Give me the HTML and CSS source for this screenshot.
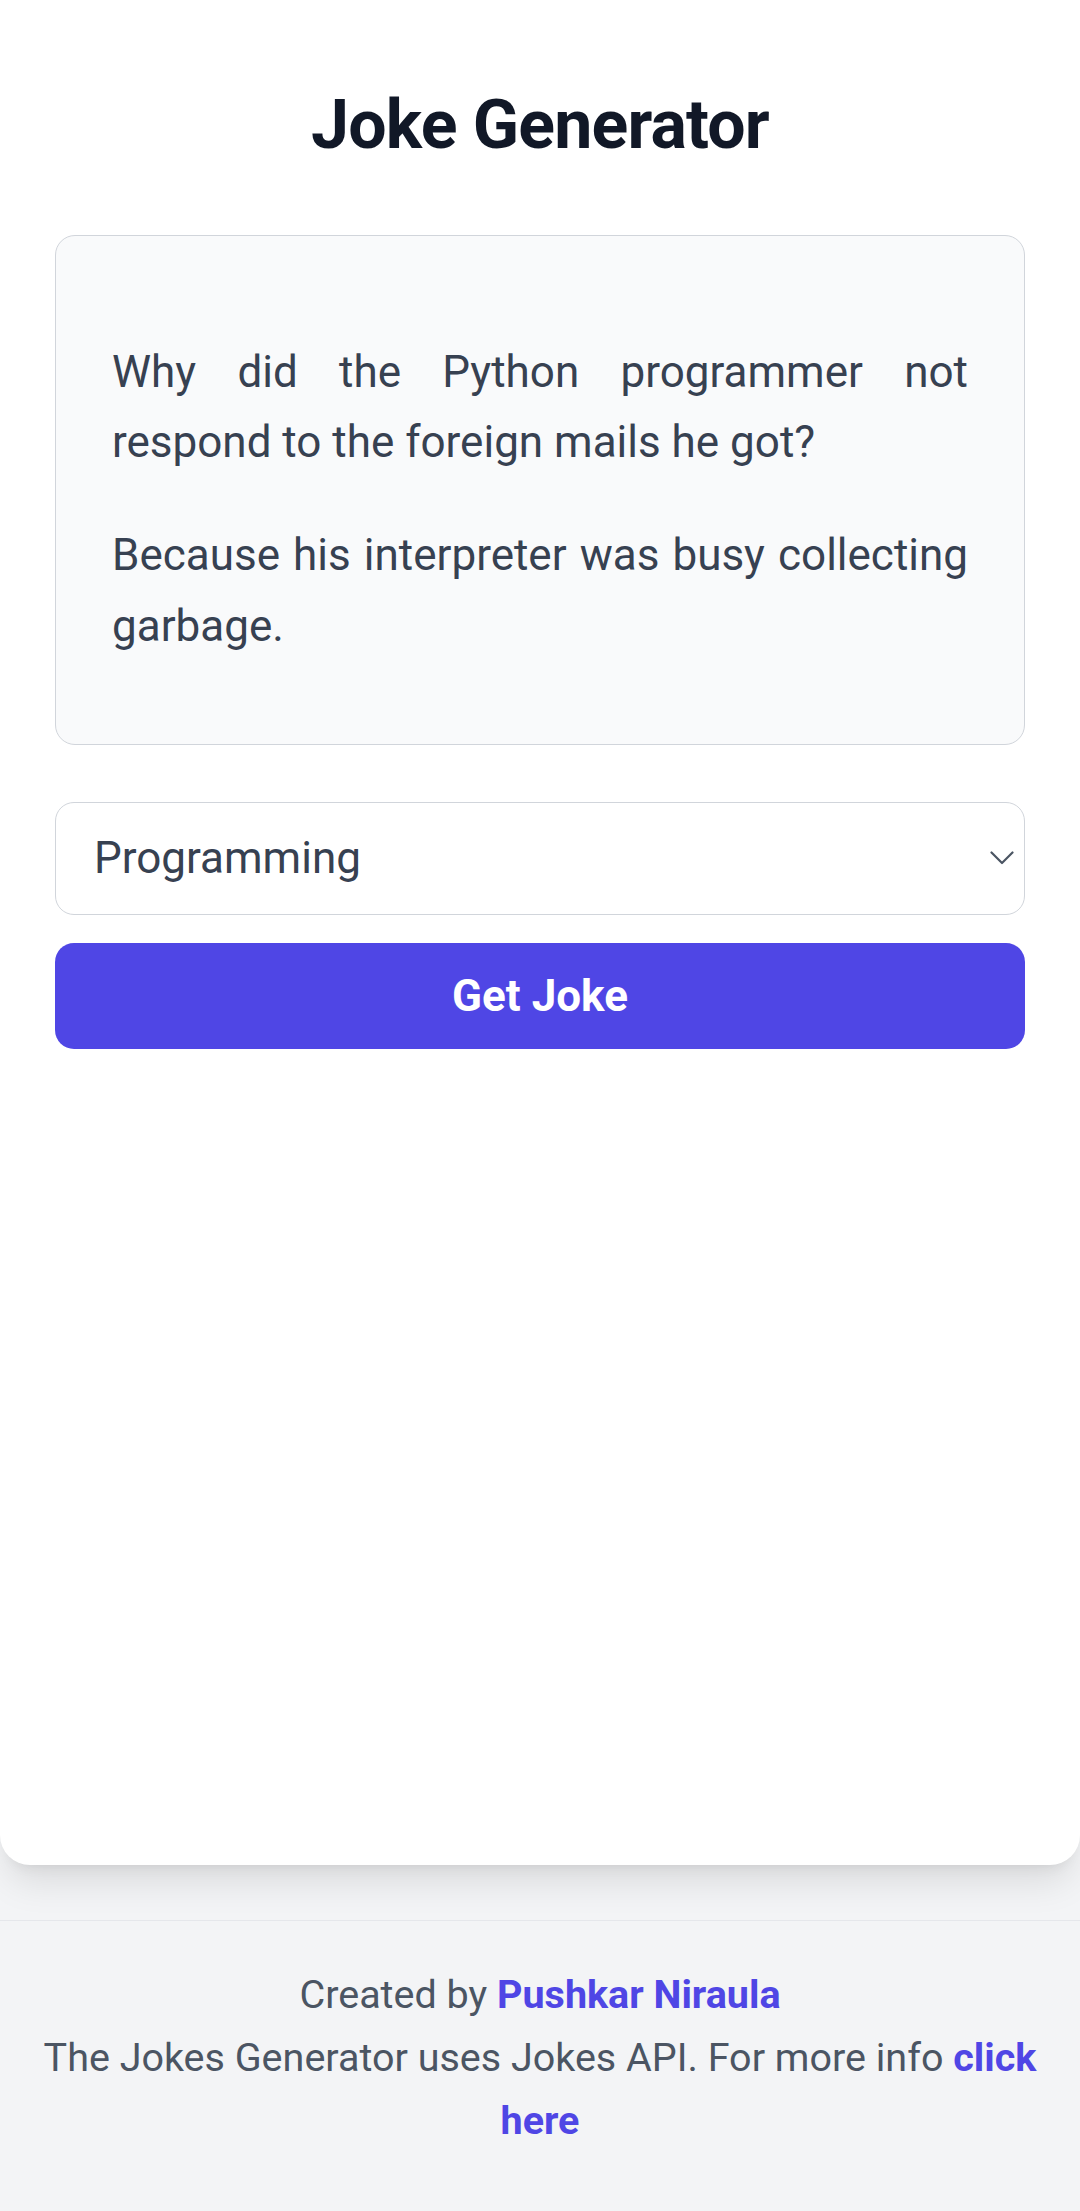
FILE: index.html
```html
<!DOCTYPE html>
<html lang="en">
<head>
<meta charset="utf-8">
<title>Joke Generator</title>
<link rel="stylesheet" href="styles.css">
</head>
<body>
<div class="app">
  <main class="sheet">
    <h1 class="title">Joke Generator</h1>
    <section class="joke-card">
      <p class="joke-line">Why did the Python programmer not respond to the foreign mails he got?</p>
      <p class="joke-line">Because his interpreter was busy collecting garbage.</p>
    </section>
    <div class="select-wrap">
      <select class="category">
        <option>Programming</option>
        <option>Misc</option>
        <option>Pun</option>
      </select>
      <svg class="chevron" viewBox="0 0 24 14" width="24" height="14" aria-hidden="true">
        <polyline points="1.5,1.5 12,12 22.5,1.5" fill="none" stroke="#4b5563" stroke-width="2.2" stroke-linecap="round" stroke-linejoin="round"/>
      </svg>
    </div>
    <button class="get-btn" type="button">Get Joke</button>
  </main>
  <footer class="footer">
    <p class="footer-line">Created by <a class="footer-link" href="#">Pushkar Niraula</a></p>
    <p class="footer-line">The Jokes Generator uses Jokes API. For more info <a class="footer-link" href="#"><span class="link-word">click</span> <span class="link-word">here</span></a></p>
  </footer>
</div>
</body>
</html>
```

FILE: styles.css
```css
* {
  box-sizing: border-box;
}

body {
  margin: 0;
  background: #f3f4f6;
  font-family: Roboto, "Noto Sans", "Liberation Sans", sans-serif;
}

.app {
  display: flex;
  flex-direction: column;
  min-height: 2211px;
}

.sheet {
  background: #ffffff;
  min-height: 1865px;
  padding: 82px 55px 0;
  border-radius: 0 0 30px 30px;
  box-shadow: 0 24px 36px -7px rgba(0, 0, 0, 0.1), 0 10px 14px -10px rgba(0, 0, 0, 0.1);
  display: flex;
  flex-direction: column;
}

.title {
  margin: 0 0 67px;
  font-size: 68px;
  line-height: 86px;
  font-weight: 700;
  letter-spacing: -0.8px;
  text-align: center;
  color: #111827;
}

.joke-card {
  background: #f9fafb;
  border: 1px solid #d1d5db;
  border-radius: 20px;
  padding: 101px 56px 83px;
}

.joke-line {
  margin: 0;
  font-size: 44px;
  line-height: 70.2px;
  color: #374151;
  text-align: justify;
}

.joke-line + .joke-line {
  margin-top: 43px;
}

.select-wrap {
  position: relative;
  margin-top: 57px;
}

.category {
  display: block;
  width: 100%;
  height: 113px;
  padding: 0 38px;
  border: 1px solid #d1d5db;
  border-radius: 19px;
  background: #ffffff;
  font-family: inherit;
  font-size: 44px;
  color: #374151;
  -webkit-appearance: none;
  appearance: none;
  outline: none;
}

.chevron {
  position: absolute;
  right: 11px;
  top: 50%;
  transform: translateY(-50%);
  pointer-events: none;
}

.get-btn {
  display: block;
  width: 100%;
  height: 106px;
  margin-top: 28px;
  border: none;
  border-radius: 19px;
  background: #4f46e5;
  color: #ffffff;
  font-family: inherit;
  font-size: 44px;
  font-weight: 700;
}

.footer {
  margin-top: 55px;
  border-top: 1px solid #e5e7eb;
  padding: 42px 24px 40px;
  text-align: center;
  flex: 1;
}

.footer-line {
  margin: 0;
  font-size: 39.5px;
  line-height: 63px;
  color: #4b5563;
}

.footer-link {
  color: #4f46e5;
  font-weight: 700;
  text-decoration: none;
}

.link-word {
  display: inline-block;
}
```
